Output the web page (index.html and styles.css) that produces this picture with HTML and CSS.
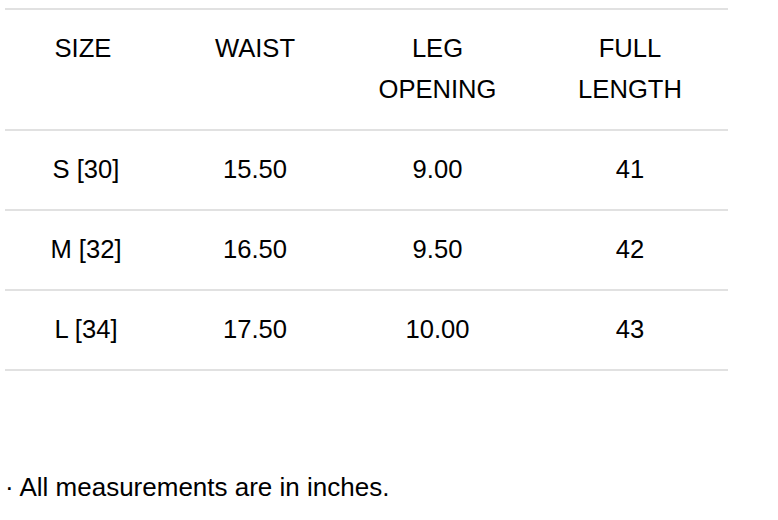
FILE: index.html
```html
<!DOCTYPE html>
<html lang="en">
<head>
<meta charset="utf-8">
<title>Size chart</title>
<link rel="stylesheet" href="styles.css">
</head>
<body>
<div class="wrap">
  <table class="chart">
    <colgroup>
      <col class="c1"><col class="c2"><col class="c3"><col class="c4">
    </colgroup>
    <thead>
      <tr>
        <th class="first">SIZE</th>
        <th>WAIST</th>
        <th>LEG<br>OPENING</th>
        <th>FULL<br>LENGTH</th>
      </tr>
    </thead>
    <tbody>
      <tr><td>S [30]</td><td>15.50</td><td>9.00</td><td>41</td></tr>
      <tr><td>M [32]</td><td>16.50</td><td>9.50</td><td>42</td></tr>
      <tr><td>L [34]</td><td>17.50</td><td>10.00</td><td>43</td></tr>
    </tbody>
  </table>
  <p class="note">· All measurements are in inches.</p>
</div>
</body>
</html>
```
FILE: styles.css
```css
html, body {
  margin: 0;
  padding: 0;
  background: #ffffff;
}
body {
  font-family: "Liberation Sans", Arial, sans-serif;
  color: #000000;
}
.wrap {
  padding: 8px 0 0 5px;
}
.chart {
  width: 723px;
  table-layout: fixed;
  border-collapse: collapse;
  border-spacing: 0;
  font-size: 25.6px;
  line-height: 41px;
}
.c1 { width: 162px; }
.c2 { width: 176px; }
.c3 { width: 189px; }
.c4 { width: 196px; }
.chart th,
.chart td {
  text-align: center;
  vertical-align: top;
  padding: 18px 0 19px;
  font-weight: normal;
}
.chart th.first {
  padding-right: 6px;
}
.chart thead tr {
  border-top: 2px solid #e1e1e1;
}
.chart tr {
  border-bottom: 2px solid #e1e1e1;
}
.note {
  margin: 96px 0 0;
  font-size: 26px;
  line-height: 41.6px;
}
```
